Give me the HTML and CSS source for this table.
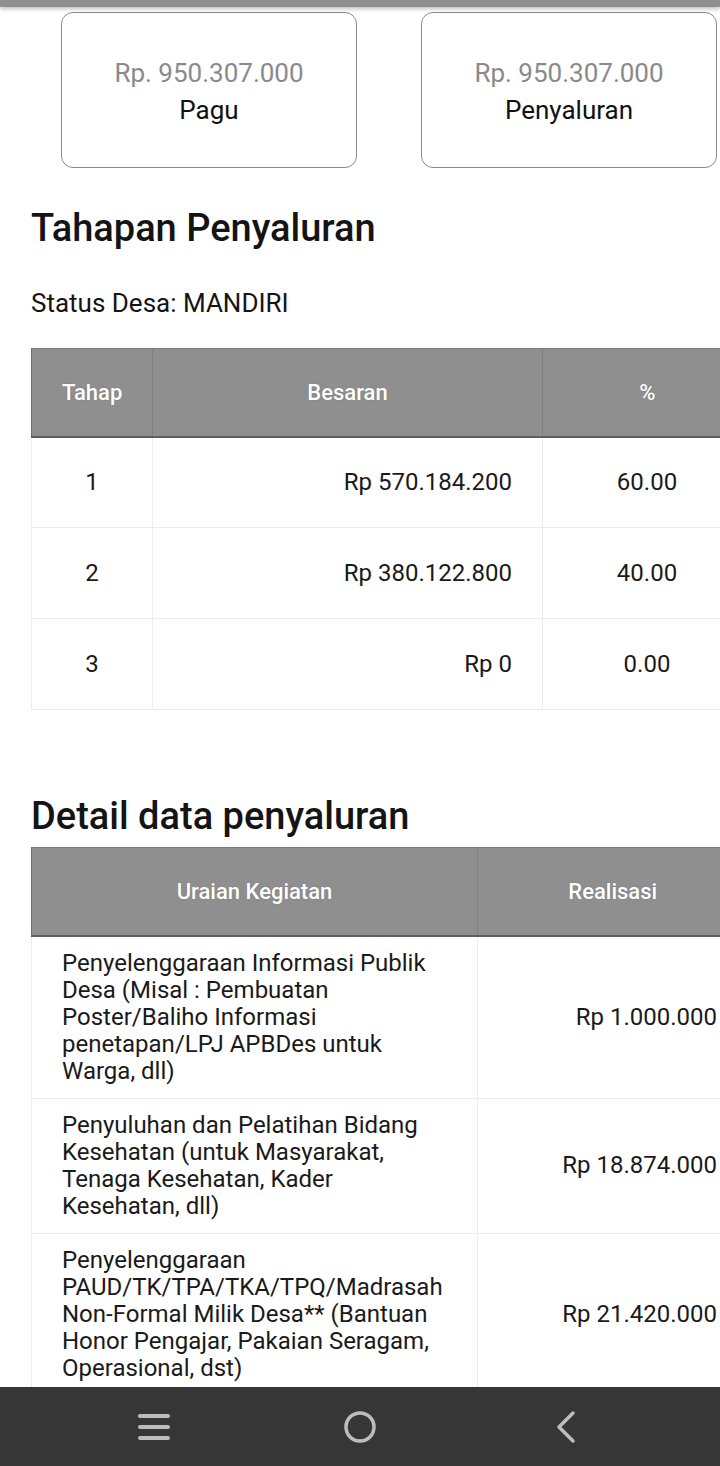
FILE: index.html
```html
<html>
  <head>
    <meta name="viewport" content="width=device-width, initial-scale=1"/>
    <link rel="stylesheet" href="styles.css">
  </head>
  <body>
    <div class="top-bar"></div>

    <div class="summary">
      <div class="summary-card">
        <p class="amount">Rp. 950.307.000</p>
        <p class="label">Pagu</p>
      </div>
      <div class="summary-card">
        <p class="amount">Rp. 950.307.000</p>
        <p class="label">Penyaluran</p>
      </div>
    </div>

    <div class="section">
      <h2>Tahapan Penyaluran</h2>
      <p class="status">Status Desa: MANDIRI</p>

      <table class="data-table tahap-table">
        <colgroup>
          <col class="col-tahap">
          <col class="col-besaran">
          <col class="col-persen">
        </colgroup>
        <thead>
          <tr>
            <th>Tahap</th>
            <th>Besaran</th>
            <th>%</th>
          </tr>
        </thead>
        <tbody>
          <tr>
            <td class="center">1</td>
            <td class="right">Rp 570.184.200</td>
            <td class="center">60.00</td>
          </tr>
          <tr>
            <td class="center">2</td>
            <td class="right">Rp 380.122.800</td>
            <td class="center">40.00</td>
          </tr>
          <tr>
            <td class="center">3</td>
            <td class="right">Rp 0</td>
            <td class="center">0.00</td>
          </tr>
        </tbody>
      </table>

      <h2 class="detail-title">Detail data penyaluran</h2>

      <table class="data-table detail-table">
        <colgroup>
          <col class="col-uraian">
          <col class="col-realisasi">
        </colgroup>
        <thead>
          <tr>
            <th>Uraian Kegiatan</th>
            <th>Realisasi</th>
          </tr>
        </thead>
        <tbody>
          <tr>
            <td>Penyelenggaraan Informasi Publik Desa (Misal : Pembuatan Poster/Baliho Informasi penetapan/LPJ APBDes untuk Warga, dll)</td>
            <td class="right">Rp 1.000.000</td>
          </tr>
          <tr>
            <td>Penyuluhan dan Pelatihan Bidang Kesehatan (untuk Masyarakat, Tenaga Kesehatan, Kader Kesehatan, dll)</td>
            <td class="right">Rp 18.874.000</td>
          </tr>
          <tr>
            <td>Penyelenggaraan PAUD/TK/TPA/TKA/TPQ/Madrasah Non-Formal Milik Desa** (Bantuan Honor Pengajar, Pakaian Seragam, Operasional, dst)</td>
            <td class="right">Rp 21.420.000</td>
          </tr>
        </tbody>
      </table>
    </div>

    <div class="nav-bar">
      <svg class="nav-icon" width="34" height="30" viewBox="0 0 34 30">
        <path d="M3 4h28M3 15h28M3 26h28" stroke="#bdbdbd" stroke-width="4" stroke-linecap="round"/>
      </svg>
      <svg class="nav-icon" width="36" height="36" viewBox="0 0 36 36">
        <circle cx="18" cy="18" r="14" fill="none" stroke="#bdbdbd" stroke-width="3.5"/>
      </svg>
      <svg class="nav-icon" width="28" height="34" viewBox="0 0 28 34">
        <path d="M24 3L10 17l14 14" fill="none" stroke="#bdbdbd" stroke-width="3.5" stroke-linecap="round" stroke-linejoin="round"/>
      </svg>
    </div>
  </body>
</html>
```

FILE: styles.css
```css
body {
  margin: 0;
  font-family: Roboto, "Liberation Sans", sans-serif;
  color: #141414;
  background-color: #fff;
  overflow: hidden;
  height: 1466px;
  position: relative;
}

p {
  margin: 0;
}

.top-bar {
  height: 7px;
  background-color: #8f8f8f;
  box-shadow: 0 2px 4px rgba(0,0,0,.25);
}

.summary {
  display: flex;
  gap: 64px;
  padding-left: 61px;
  margin-top: 5px;
}

.summary-card {
  flex: none;
  width: 294px;
  height: 151px;
  border: 1px solid #8a8a8a;
  border-radius: 12px;
  display: flex;
  flex-direction: column;
  align-items: center;
  justify-content: center;
  gap: 6px;
  padding-top: 3px;
  box-sizing: content-box;
}

.amount {
  font-size: 26px;
  line-height: 31px;
  color: #8a8a8a;
}

.label {
  font-size: 26px;
  line-height: 31px;
  color: #111;
}

.section {
  padding-left: 31px;
}

h2 {
  margin: 0;
  font-size: 38px;
  font-weight: 500;
  color: #141414;
  padding-top: 38px;
  line-height: 44px;
}

.status {
  font-size: 26px;
  margin-top: 38px;
  line-height: 30px;
}

.data-table {
  border-collapse: collapse;
  table-layout: fixed;
  font-size: 24px;
}

.data-table th {
  background-color: #8f8f8f;
  color: #fff;
  font-weight: 500;
  font-size: 22px;
  text-shadow: 0 0 2px rgba(0,0,0,.15);
  height: 88px;
  border-left: 1px solid #7f7f7f;
  border-top: 1px solid #7a7a7a;
  border-bottom: 2px solid #5e5e5e;
  padding: 0 30px;
  text-align: center;
}

.data-table th:first-child {
  border-left: 1px solid #6e6e6e;
}

.data-table td {
  border: 1px solid #ececec;
  padding: 0 30px;
  line-height: 27px;
  color: #1a1a1a;
}

.tahap-table {
  margin-top: 30px;
  width: 720px;
}

.tahap-table td {
  height: 91px;
}

.col-tahap {
  width: 121px;
}

.col-besaran {
  width: 390px;
}

.col-persen {
  width: 209px;
}

.center {
  text-align: center;
}

.right {
  text-align: right;
}

.detail-title {
  padding-top: 84px;
  margin-bottom: 9px;
}

.detail-table {
  width: 716px;
}

.detail-table td {
  padding-top: 13px;
  padding-bottom: 13px;
}

.col-uraian {
  width: 446px;
}

.col-realisasi {
  width: 270px;
}

.nav-bar {
  position: absolute;
  left: 0;
  right: 0;
  bottom: 0;
  height: 79px;
  background-color: #363636;
  display: flex;
  align-items: center;
  padding-left: 137px;
  gap: 171px;
}

.nav-icon {
  display: block;
}
```
